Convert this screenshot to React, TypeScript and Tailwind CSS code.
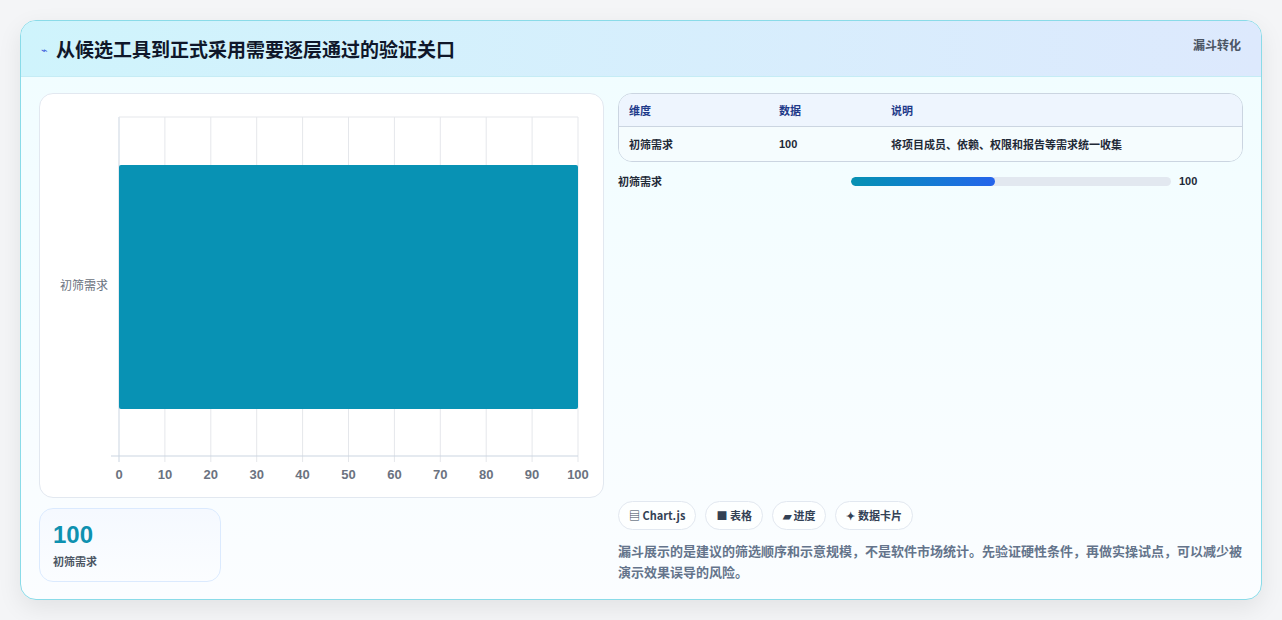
export default function App() {
  const ticks = [0,10,20,30,40,50,60,70,80,90,100];
  const x0 = 79, x1 = 538;
  const font = '"Noto Sans CJK SC", "Liberation Sans", sans-serif';
  return (
    <div className="w-[1282px] h-[620px] bg-[#f4f5f7] pt-[20px] pl-[20px]" style={{ fontFamily: font }}>
      <div className="w-[1242px] h-[580px] rounded-[16px] border border-[#8adbe8] bg-gradient-to-b from-[#f0fdff] to-[#fbfdff] shadow-[0_8px_24px_rgba(0,0,0,0.08)] overflow-hidden flex flex-col">
        <div className="h-[56px] shrink-0 bg-gradient-to-r from-[#cff4fc] to-[#dde9fd] border-b border-[#c5ecf5] flex items-start justify-between px-[20px]">
          <div className="flex items-center gap-[8px] h-[56px]">
            <span className="text-[#3b5bdb] text-[11px]">⌁</span>
            <span className="text-[19px] font-bold text-[#0f172a]">从候选工具到正式采用需要逐层通过的验证关口</span>
          </div>
          <span className="mt-[15px] text-[12px] font-bold text-[#4b5563]">漏斗转化</span>
        </div>
        <div className="flex flex-1 px-[18px] pt-[16px] pb-[18px] gap-[14px]">
          <div className="w-[565px] flex flex-col gap-[10px]">
            <div className="h-[405px] bg-white rounded-[14px] border border-[#e2e8f0]">
              <svg width="563" height="403" style={{ fontFamily: font }}>
                {ticks.map((t) => {
                  const x = x0 + (x1 - x0) * t / 100;
                  return (
                    <g key={t}>
                      <line x1={x} y1={23} x2={x} y2={368} stroke={t === 0 ? "#cbd5e1" : "#e5e7eb"} />
                      <text x={x} y={385} textAnchor="middle" fontSize="13" fontWeight="bold" fill="#6b7280" fontFamily='"Liberation Sans", sans-serif'>{t}</text>
                    </g>
                  );
                })}
                <line x1={x0} y1={23} x2={x1} y2={23} stroke="#e5e7eb" />
                <line x1={x0 - 8} y1={362} x2={x1} y2={362} stroke="#cbd5e1" />
                <rect x={x0} y={71} width={x1 - x0} height={244} rx={2} fill="#0892b4" />
                <text x={68} y={196} textAnchor="end" fontSize="12" fill="#6b7280">初筛需求</text>
              </svg>
            </div>
            <div className="w-[182px] h-[74px] rounded-[14px] border border-[#dbeafe] bg-gradient-to-b from-[#f5f9ff] to-[#fbfdff] px-[13px] pt-[12px]">
              <div className="text-[24px] font-bold leading-[28px] text-[#0e91b0]" style={{ fontFamily: '"Liberation Sans", sans-serif' }}>100</div>
              <div className="text-[11px] font-bold text-[#4b5563] mt-[4px]">初筛需求</div>
            </div>
          </div>
          <div className="flex-1 flex flex-col">
            <div className="rounded-[14px] border border-[#cbd5e1] overflow-hidden text-[11px] font-bold">
              <div className="h-[33px] bg-[#eef5fe] border-b border-[#cbd5e1] flex items-center text-[#1e3a8a] px-[10px]">
                <span className="w-[150px]">维度</span><span className="w-[112px]">数据</span><span>说明</span>
              </div>
              <div className="h-[34px] bg-[#f5fcfe] flex items-center text-[#1f2937] px-[10px]">
                <span className="w-[150px]">初筛需求</span><span className="w-[112px]" style={{ fontFamily: '"Liberation Sans", sans-serif' }}>100</span><span>将项目成员、依赖、权限和报告等需求统一收集</span>
              </div>
            </div>
            <div className="flex items-center mt-[11px] h-[16px] text-[11px] font-bold text-[#1f2937]">
              <span className="w-[233px]">初筛需求</span>
              <div className="w-[320px] h-[9px] rounded-full bg-[#e2e8f0] overflow-hidden">
                <div className="h-full w-[45%] rounded-full bg-gradient-to-r from-[#0891b2] to-[#2563eb]" />
              </div>
              <span className="ml-[8px]" style={{ fontFamily: '"Liberation Sans", sans-serif' }}>100</span>
            </div>
            <div className="flex-1" />
            <div className="flex gap-[9px] text-[11px] font-bold text-[#334155]">
              {["▤ Chart.js", "■ 表格", "▰ 进度", "✦ 数据卡片"].map((c) => (
                <span key={c} className="h-[29px] px-[10px] rounded-full border border-[#e2e8f0] bg-white/70 flex items-center">{c}</span>
              ))}
            </div>
            <p className="mt-[10px] text-[13px] leading-[21px] font-bold text-[#64748b]">漏斗展示的是建议的筛选顺序和示意规模，不是软件市场统计。先验证硬性条件，再做实操试点，可以减少被演示效果误导的风险。</p>
          </div>
        </div>
      </div>
    </div>
  );
}
